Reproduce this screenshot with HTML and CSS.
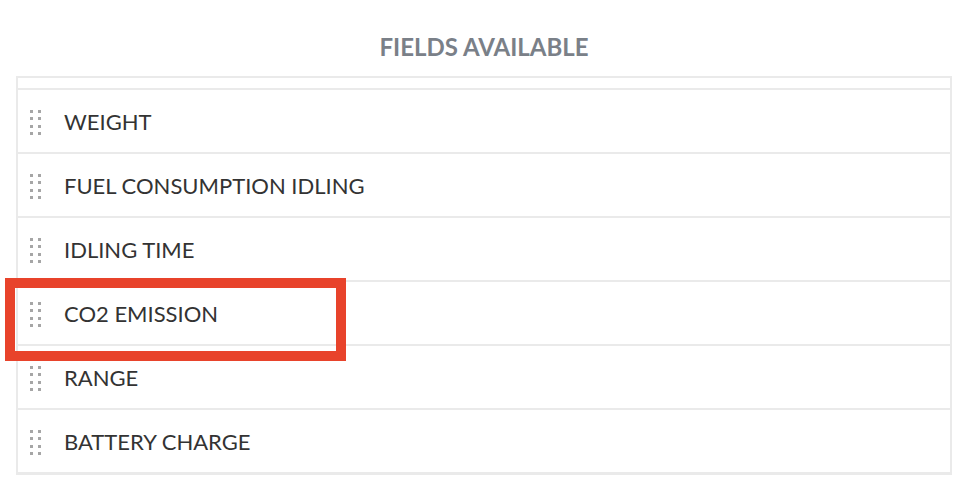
FILE: index.html
```html
<!DOCTYPE html>
<html lang="en">
<head>
    <meta charset="UTF-8">
    <meta name="viewport" content="width=device-width, initial-scale=1.0">
    <title>Fields available</title>
    <link rel="stylesheet" href="styles.css">
</head>
<body>

    <div class="fields-panel">
        <h2 class="panel-title">FIELDS AVAILABLE</h2>

        <div class="field-list">
            <div class="field-row">
                <svg class="grip" width="11" height="26" viewBox="0 0 11 26"><g fill="#a6a6a6"><rect x="0" y="0" width="3" height="3"/><rect x="8" y="0" width="3" height="3"/><rect x="0" y="7" width="3" height="3"/><rect x="8" y="7" width="3" height="3"/><rect x="0" y="15" width="3" height="3"/><rect x="8" y="15" width="3" height="3"/><rect x="0" y="22" width="3" height="3"/><rect x="8" y="22" width="3" height="3"/></g></svg>
                <span class="field-name">WEIGHT</span>
            </div>
            <div class="field-row">
                <svg class="grip" width="11" height="26" viewBox="0 0 11 26"><g fill="#a6a6a6"><rect x="0" y="0" width="3" height="3"/><rect x="8" y="0" width="3" height="3"/><rect x="0" y="7" width="3" height="3"/><rect x="8" y="7" width="3" height="3"/><rect x="0" y="15" width="3" height="3"/><rect x="8" y="15" width="3" height="3"/><rect x="0" y="22" width="3" height="3"/><rect x="8" y="22" width="3" height="3"/></g></svg>
                <span class="field-name">FUEL CONSUMPTION IDLING</span>
            </div>
            <div class="field-row">
                <svg class="grip" width="11" height="26" viewBox="0 0 11 26"><g fill="#a6a6a6"><rect x="0" y="0" width="3" height="3"/><rect x="8" y="0" width="3" height="3"/><rect x="0" y="7" width="3" height="3"/><rect x="8" y="7" width="3" height="3"/><rect x="0" y="15" width="3" height="3"/><rect x="8" y="15" width="3" height="3"/><rect x="0" y="22" width="3" height="3"/><rect x="8" y="22" width="3" height="3"/></g></svg>
                <span class="field-name">IDLING TIME</span>
            </div>
            <div class="field-row">
                <svg class="grip" width="11" height="26" viewBox="0 0 11 26"><g fill="#a6a6a6"><rect x="0" y="0" width="3" height="3"/><rect x="8" y="0" width="3" height="3"/><rect x="0" y="7" width="3" height="3"/><rect x="8" y="7" width="3" height="3"/><rect x="0" y="15" width="3" height="3"/><rect x="8" y="15" width="3" height="3"/><rect x="0" y="22" width="3" height="3"/><rect x="8" y="22" width="3" height="3"/></g></svg>
                <span class="field-name">CO2 EMISSION</span>
            </div>
            <div class="field-row">
                <svg class="grip" width="11" height="26" viewBox="0 0 11 26"><g fill="#a6a6a6"><rect x="0" y="0" width="3" height="3"/><rect x="8" y="0" width="3" height="3"/><rect x="0" y="7" width="3" height="3"/><rect x="8" y="7" width="3" height="3"/><rect x="0" y="15" width="3" height="3"/><rect x="8" y="15" width="3" height="3"/><rect x="0" y="22" width="3" height="3"/><rect x="8" y="22" width="3" height="3"/></g></svg>
                <span class="field-name">RANGE</span>
            </div>
            <div class="field-row">
                <svg class="grip" width="11" height="26" viewBox="0 0 11 26"><g fill="#a6a6a6"><rect x="0" y="0" width="3" height="3"/><rect x="8" y="0" width="3" height="3"/><rect x="0" y="7" width="3" height="3"/><rect x="8" y="7" width="3" height="3"/><rect x="0" y="15" width="3" height="3"/><rect x="8" y="15" width="3" height="3"/><rect x="0" y="22" width="3" height="3"/><rect x="8" y="22" width="3" height="3"/></g></svg>
                <span class="field-name">BATTERY CHARGE</span>
            </div>
        </div>

        <!-- highlight drawn over the CO2 row -->
        <div class="highlight"></div>
    </div>

</body>
</html>
```

FILE: styles.css
```css
* {
    margin: 0;
    padding: 0;
    box-sizing: border-box;
}

body {
    background: #fff;
    font-family: Lato, "Open Sans", Arial, sans-serif;
    color: #333;
}

.fields-panel {
    position: relative;
    width: 936px;
    margin-left: 16px;
}

.panel-title {
    padding-top: 32px;
    margin-bottom: 15px;
    font-size: 24px;
    line-height: 29px;
    font-weight: bold;
    color: #7a8088;
    text-align: center;
}

.field-list {
    border: 2px solid #eaeaea;
    border-bottom-width: 3px;
    padding-top: 10px;
}

.field-row {
    display: flex;
    align-items: center;
    height: 64px;
    padding-left: 12px;
    border-top: 2px solid #eaeaea;
}

.grip {
    display: block;
    flex-shrink: 0;
    margin-right: 23px;
    margin-top: 4px;
}

.field-name {
    font-size: 22px;
    color: #333;
}

.highlight {
    position: absolute;
    left: -11px;
    top: 278px;
    width: 341px;
    height: 83px;
    border: 10px solid #e8432b;
}
```
